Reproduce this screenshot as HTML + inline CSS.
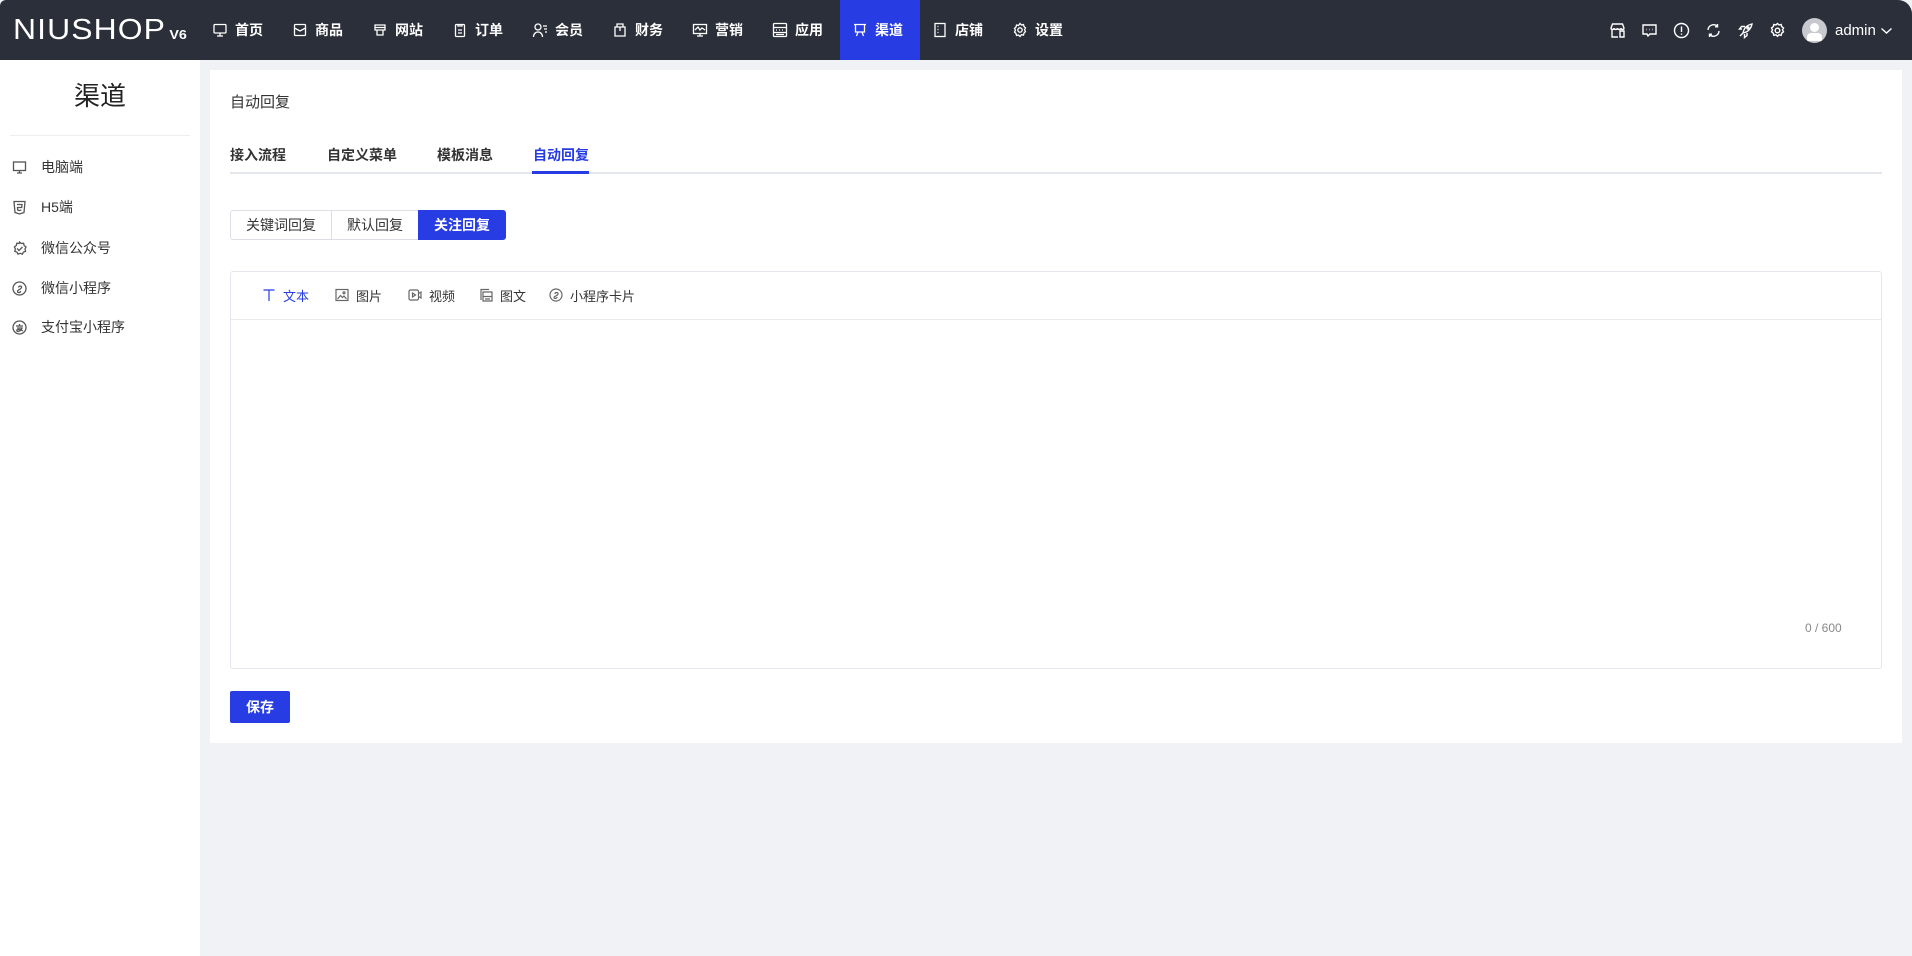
<!DOCTYPE html>
<html><head><meta charset="utf-8"><style>
*{margin:0;padding:0;box-sizing:border-box}
body{width:1912px;height:956px;background:#f0f2f5;font-family:"Liberation Sans","Noto Sans CJK SC",sans-serif;color:#333;position:relative;overflow:hidden;font-size:14px}
.hd{position:absolute;left:0;top:0;width:1912px;height:60px;background:#2b2f3a;color:#fff;border-radius:6px 14px 0 0}
.logo{position:absolute;left:13px;top:14px;font-size:29px;letter-spacing:1px;font-weight:400;line-height:32px;transform:scaleX(1.1);transform-origin:left;white-space:nowrap}
.logo span{font-size:13px;font-weight:700;margin-left:3px;letter-spacing:0}
.nav{position:absolute;left:200px;top:0;height:60px;display:flex}
.nav div{width:80px;height:60px;display:flex;align-items:center;padding-left:12px;font-size:14px;font-weight:600;gap:7px}
.nav div.on{background:#273ce2;width:80px}
.nav svg{width:16px;height:16px;fill:none;stroke:#fff;stroke-width:1.3}
.ri{position:absolute;top:0;height:60px;display:flex;align-items:center}
.ri svg{width:17px;height:17px;fill:none;stroke:#fff;stroke-width:1.4}
.side{position:absolute;left:0;top:60px;width:200px;height:896px;background:#fff}
.side h1{position:absolute;left:0;width:200px;top:21px;text-align:center;font-size:26px;font-weight:400;color:#222;line-height:30px}
.side hr{position:absolute;left:10px;width:180px;top:75px;border:0;border-top:1px solid #eceef1}
.mi{position:absolute;left:12px;display:flex;align-items:center;font-size:14px;color:#333;height:20px}
.mi svg{width:15px;height:15px;fill:none;stroke:#555;stroke-width:1.3;margin-right:14px}
.card{position:absolute;left:210px;top:70px;width:1692px;height:673px;background:#fff}
.t{position:absolute;font-size:14px}
.tabs{position:absolute;left:230px;top:172px;width:1652px;border-top:2px solid #e4e7ed}
.btn{position:absolute;top:210px;height:30px;border:1px solid #dcdfe6;display:flex;align-items:center;justify-content:center;font-size:14px;color:#333;background:#fff}
.ed{position:absolute;left:230px;top:271px;width:1652px;height:398px;border:1px solid #e4e7ed;border-radius:3px}
.tb{position:absolute;top:285px;display:flex;align-items:center;font-size:13px;color:#333;height:20px}
.tb svg{width:14px;height:14px;fill:none;stroke:#666;stroke-width:1.2;margin-right:7px}
</style></head><body>
<div class="hd">
 <div class="logo">NIUSHOP<span>V6</span></div>
 <div class="nav">
  <div><svg viewBox="0 0 16 16"><rect x="2" y="2.5" width="12" height="8.5" rx="1"/><path d="M8 11v3M5 14h6"/></svg>首页</div>
  <div><svg viewBox="0 0 16 16"><rect x="2.5" y="2.5" width="11" height="11" rx="1"/><path d="M2.5 6l5.5 3 5.5-3"/></svg>商品</div>
  <div><svg viewBox="0 0 16 16"><path d="M3 3h10v5H3zM5 8v5h6V8M3 5.5h10"/></svg>网站</div>
  <div><svg viewBox="0 0 16 16"><rect x="3.5" y="2.5" width="9" height="12" rx="1"/><path d="M6 2v2h4V2M6 8h4M6 11h4"/></svg>订单</div>
  <div><svg viewBox="0 0 16 16"><circle cx="6" cy="5" r="3"/><path d="M1.5 15c0-3 2-5 4.5-5s4.5 2 4.5 5M11 4h4M12 7h3M13 10h2"/></svg>会员</div>
  <div><svg viewBox="0 0 16 16"><path d="M3 5h10v9H3zM5 5V2h6v3M8 5v4"/></svg>财务</div>
  <div><svg viewBox="0 0 16 16"><rect x="1.5" y="2.5" width="13" height="9"/><path d="M3 8l3-3 2 3 2-2 3 2M8 11.5V14M5 14h6"/></svg>营销</div>
  <div><svg viewBox="0 0 16 16"><rect x="1.5" y="1.5" width="13" height="13" rx="1"/><path d="M1.5 5.5h13M1.5 10.5h13M4 8h1M7 8h1M10 8h1M4 12.5h8"/></svg>应用</div>
  <div class="on"><svg viewBox="0 0 16 16"><path d="M2 2.5h12M3.5 2.5V10h9V2.5M6 10l-1.5 4M10 10l1.5 4"/></svg>渠道</div>
  <div><svg viewBox="0 0 16 16"><rect x="3" y="1.5" width="10" height="13"/><path d="M5.5 4.5h1M5.5 7.5h1M5.5 10.5h1"/></svg>店铺</div>
  <div><svg viewBox="0 0 16 16"><circle cx="8" cy="8" r="2.2"/><path d="M8 1.5l1.5 1.5 2-.5.5 2 1.5 1.5-1 1.8 1 1.8-1.5 1.5-.5 2-2-.5L8 14.5l-1.5-1.5-2 .5-.5-2L2.5 10l1-1.8-1-1.8L4 5l.5-2 2 .5z"/></svg>设置</div>
 </div>
 <div class="ri" style="left:1609px"><svg viewBox="0 0 17 17"><path d="M2 6l1.5-4h10L15 6M2 6c0 2 3 2 3 0 0 2 3.5 2 3.5 0 0 2 3.5 2 3.5 0 0 2 3 2 3 0M3 8v7h6M11 9h4v6h-4z"/></svg></div>
 <div class="ri" style="left:1641px"><svg viewBox="0 0 17 17"><path d="M2 3h13v9H9l-2 2-1-2H2z"/><path d="M5.5 7.5h.5M8.2 7.5h.5M11 7.5h.5" stroke-width="1.8"/></svg></div>
 <div class="ri" style="left:1673px"><svg viewBox="0 0 17 17"><circle cx="8.5" cy="8.5" r="7"/><path d="M8.5 4.5v5.5M8.5 11.5v1.2"/></svg></div>
 <div class="ri" style="left:1705px"><svg viewBox="0 0 17 17"><path d="M3 8a5.5 5.5 0 0 1 9.5-3.5M14 9a5.5 5.5 0 0 1-9.5 3.5M12.5 2v2.8H10M4.5 15v-2.8H7"/></svg></div>
 <div class="ri" style="left:1737px"><svg viewBox="0 0 17 17"><path d="M6 11C7 6 10 3 15 2c-1 5-4 8-9 9zM6 11l-3 3M5 7H2.5l2-2.5H8M10 11v2.5L7.5 15.5V12"/><circle cx="11" cy="6" r="1"/></svg></div>
 <div class="ri" style="left:1769px"><svg viewBox="0 0 17 17"><circle cx="8.5" cy="8.5" r="2.3"/><path d="M8.5 1.5l1.6 1.5 2.1-.5.5 2.1 1.8 1.4-1 1.900 1 1.9-1.8 1.4-.5 2.1-2.1-.5-1.6 1.5-1.6-1.5-2.1.5-.5-2.1-1.8-1.4 1-1.9-1-1.9 1.8-1.4.5-2.1 2.1.5z"/></svg></div>
 <div class="ri" style="left:1802px"><div style="width:25px;height:25px;border-radius:50%;background:#c7c9ce;position:relative;overflow:hidden"><div style="position:absolute;left:8px;top:5px;width:9px;height:9px;border-radius:50%;background:#fff"></div><div style="position:absolute;left:5px;top:15px;width:15px;height:8px;border-radius:4px 4px 1px 1px;background:#fff"></div></div></div>
 <div class="ri" style="left:1835px;font-size:15px">admin</div>
 <div class="ri" style="left:1880px"><svg viewBox="0 0 13 13" style="width:13px;height:13px"><path d="M1.5 4.5l5 4.5 5-4.5"/></svg></div>
</div>
<div class="side">
 <h1>渠道</h1><hr>
 <div class="mi" style="top:97px"><svg viewBox="0 0 15 15"><rect x="1.5" y="2" width="12" height="8.5"/><path d="M7.5 10.5v2.5M5 13h5"/></svg>电脑端</div>
 <div class="mi" style="top:137px"><svg viewBox="0 0 15 15"><path d="M2 1.5h11l-1 11-4.5 1.5L3 12.5z M5 4.5h5l-.3 3H5.5l.2 2.5 1.8.6 1.8-.6"/></svg>H5端</div>
 <div class="mi" style="top:178px"><svg viewBox="0 0 15 15"><path d="M7.5 1l1.8 1.5 2.3-.3.5 2.3 1.9 1.4-1 2.1.6 2.3-2.2.8-1 2.1-2.2-.9-2.2.9-1-2.1-2.2-.8.6-2.3-1-2.1 1.9-1.4.5-2.3 2.3.3z"/><path d="M5 7.5l2 2 3.5-3.5"/></svg>微信公众号</div>
 <div class="mi" style="top:218px"><svg viewBox="0 0 15 15"><circle cx="7.5" cy="7.5" r="6.5"/><path d="M6.5 6.5c0-2 3.5-2 3 0s-4 2-4 4 3.5 1 3-.5"/></svg>微信小程序</div>
 <div class="mi" style="top:257px"><svg viewBox="0 0 15 15"><circle cx="7.5" cy="7.5" r="6.5"/><path d="M4 6h7M7.5 4v2M5 8h5c-1 3-4 4-5 3s1-3 6 0"/></svg>支付宝小程序</div>
</div>
<div class="card"></div>
<div class="t" style="left:230px;top:91px;font-size:15px;color:#333">自动回复</div>
<div class="t" style="left:230px;top:145px;font-weight:600;color:#333">接入流程</div>
<div class="t" style="left:327px;top:145px;font-weight:600;color:#333">自定义菜单</div>
<div class="t" style="left:437px;top:145px;font-weight:600;color:#333">模板消息</div>
<div class="t" style="left:533px;top:145px;font-weight:600;color:#273ce2">自动回复</div>
<div class="tabs"></div>
<div style="position:absolute;left:532px;top:171px;width:57px;height:3px;background:#273ce2"></div>
<div class="btn" style="left:230px;width:102px;border-radius:3px 0 0 3px">关键词回复</div>
<div class="btn" style="left:331px;width:88px;border-left:1px solid #dcdfe6">默认回复</div>
<div class="btn" style="left:418px;width:88px;background:#273ce2;border-color:#273ce2;color:#fff;font-weight:600;border-radius:0 3px 3px 0">关注回复</div>
<div class="ed"><div style="position:absolute;left:0;top:47px;width:100%;border-top:1px solid #e8eaee"></div></div>
<div class="tb" style="left:262px;color:#273ce2"><svg viewBox="0 0 14 14" style="stroke:#273ce2"><path d="M1.5 2h11M7 2v11"/></svg>文本</div>
<div class="tb" style="left:335px"><svg viewBox="0 0 14 14"><rect x="1" y="1.5" width="12" height="11"/><path d="M2.5 11l3-3.5 2 2 1.5-1.5 2.5 3"/><circle cx="9" cy="4.8" r="1"/></svg>图片</div>
<div class="tb" style="left:408px"><svg viewBox="0 0 14 14"><rect x="1" y="2" width="9.5" height="10" rx="1.5"/><path d="M10.5 5.5l2.5-1.5v6l-2.5-1.5M4.5 5v4l3-2z"/></svg>视频</div>
<div class="tb" style="left:479px"><svg viewBox="0 0 14 14"><path d="M2 12V1.5h8M4 4h9v9H4zM4 8.5h9M6 11h5"/></svg>图文</div>
<div class="tb" style="left:549px"><svg viewBox="0 0 14 14"><circle cx="7" cy="7" r="6"/><path d="M6 6c0-2 3-2 3 0s-4 1.8-4 3.5 3 1 3-.5"/></svg>小程序卡片</div>
<div class="t" style="left:1805px;top:621px;font-size:12px;color:#888">0 / 600</div>
<div style="position:absolute;left:230px;top:691px;width:60px;height:32px;background:#273ce2;color:#fff;font-weight:600;border-radius:2px;display:flex;align-items:center;justify-content:center;font-size:14px">保存</div>
</body></html>
